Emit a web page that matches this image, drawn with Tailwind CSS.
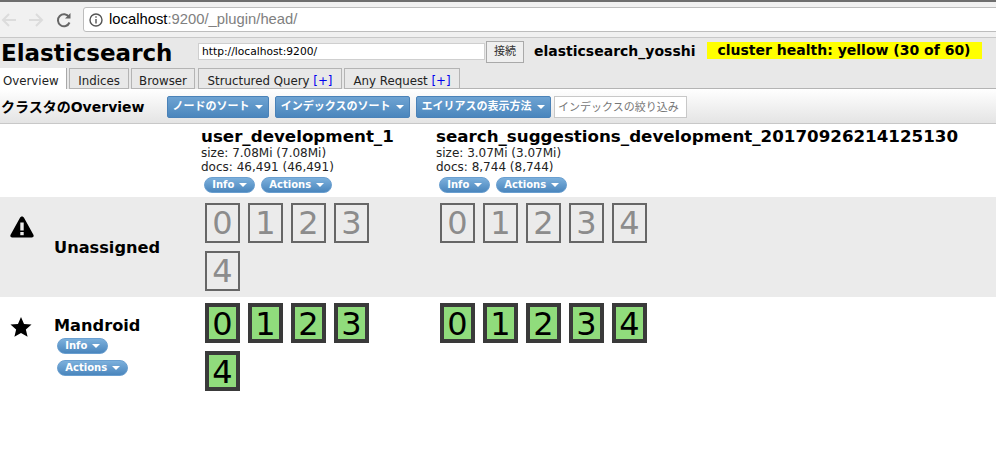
<!DOCTYPE html>
<html lang="en">
<head>
  <meta charset="UTF-8" />
  <title>Elasticsearch head</title>
  <script src="https://cdn.jsdelivr.net/npm/@tailwindcss/browser@4"></script>
</head>
<body class="w-[996px] h-[462px] overflow-hidden bg-white text-black font-['DejaVu_Sans','Noto_Sans_CJK_JP',sans-serif]">

  <!-- Browser bar -->
  <div class="h-[38px] bg-[#f1f1f1] border-t-2 border-t-[#6e6e6e] border-b border-b-[#c8c8c8] flex items-center">
    <svg class="ml-[1px] w-[16px] h-[16px]" viewBox="0 0 16 16" fill="none" stroke="#dcdcdc" stroke-width="2"><path d="M15 8H2M8 2L2 8l6 6"/></svg>
    <svg class="ml-[11px] w-[16px] h-[16px]" viewBox="0 0 16 16" fill="none" stroke="#dcdcdc" stroke-width="2"><path d="M1 8h13M8 2l6 6-6 6"/></svg>
    <svg class="ml-[12px] w-[16px] h-[16px]" viewBox="0 0 16 16" fill="none" stroke="#666" stroke-width="2"><path d="M13.5 10.5A6 6 0 1 1 13 5"/><path d="M14.5 1v5.500H9" fill="#666" stroke="none"/></svg>
    <div class="ml-[11px] flex-1 h-[25px] -mr-2 bg-white border border-[#bdbdbd] rounded-[3px] flex items-center font-['Liberation_Sans',sans-serif] text-[14.8px]">
      <svg class="ml-[5px] w-[14px] h-[14px]" viewBox="0 0 14 14" fill="none" stroke="#555" stroke-width="1.4"><circle cx="7" cy="7" r="6"/><path d="M7 6v4.500M7 3.200v1.500"/></svg>
      <span class="ml-[6px]">localhost<span class="text-[#808080]">:9200/_plugin/head/</span></span>
    </div>
  </div>

  <!-- Header -->
  <div class="h-[51px] bg-[#e8e8e8] flex items-start">
    <h1 class="ml-[1px] mt-[1px] w-[197px] text-[23px] leading-[28px] font-bold">Elasticsearch</h1>
    <input value="http://localhost:9200/" class="mt-[5px] w-[287px] h-[17px] bg-white border border-[#cfcfcf] px-[3px] text-[10.700px] text-black outline-none" />
    <button class="ml-[1px] mt-[3px] w-[38px] h-[22px] bg-[#efefef] border border-[#a9a9a9] text-[11px] text-[#333]">接続</button>
    <span class="ml-[10px] mt-[3px] text-[14px] leading-[20px] font-bold">elasticsearch_yosshi</span>
    <span class="ml-[11px] mt-[4px] w-[275px] h-[17px] bg-[#ffff00] text-center text-[14px] leading-[17px] font-bold">cluster health: yellow (30 of 60)</span>
  </div>

  <!-- Tabs -->
  <div class="h-0 -mt-[21px] mb-[21px] flex items-start text-[11.800px] text-[#222] relative">
    <div class="h-[21px] w-[67px] bg-white border-r border-[#a9a9a9] pl-[3px] leading-[26px] relative">Overview</div>
    <div class="ml-[2px] h-[21px] w-[60px] border border-[#b4b4b4] text-center leading-[24px]">Indices</div>
    <div class="ml-[2px] h-[21px] w-[64px] border border-[#b4b4b4] text-center leading-[24px]">Browser</div>
    <div class="ml-[3px] h-[21px] w-[144px] border border-[#b4b4b4] text-center leading-[24px]">Structured Query <span class="text-[#0000ee]">[+]</span></div>
    <div class="ml-[2px] h-[21px] w-[116px] border border-[#b4b4b4] text-center leading-[24px]">Any Request <span class="text-[#0000ee]">[+]</span></div>
    <div class="flex-1 h-[21px] border-b border-[#b4b4b4]"></div>
  </div>

  <!-- Toolbar -->
  <div class="h-[35px] pt-[2px] border-b border-[#c8c8c8] bg-gradient-to-b from-white to-[#e4e4e4] flex items-center">
    <span class="ml-[1px] w-[166px] text-[14px] font-bold">クラスタのOverview</span>
    <button class="h-[22px] w-[102px] rounded-[2px] border border-[#4a82b8] bg-gradient-to-b from-[#6ea3d2] to-[#4a86bd] text-white text-[11px] font-bold">ノードのソート <span class="inline-block align-middle ml-[2px] border-x-[4px] border-x-transparent border-t-[4px] border-t-white"></span></button>
    <button class="ml-[6px] h-[22px] w-[135px] rounded-[2px] border border-[#4a82b8] bg-gradient-to-b from-[#6ea3d2] to-[#4a86bd] text-white text-[11px] font-bold">インデックスのソート <span class="inline-block align-middle ml-[2px] border-x-[4px] border-x-transparent border-t-[4px] border-t-white"></span></button>
    <button class="ml-[6px] h-[22px] w-[135px] rounded-[2px] border border-[#4a82b8] bg-gradient-to-b from-[#6ea3d2] to-[#4a86bd] text-white text-[11px] font-bold">エイリアスの表示方法 <span class="inline-block align-middle ml-[2px] border-x-[4px] border-x-transparent border-t-[4px] border-t-white"></span></button>
    <input placeholder="インデックスの絞り込み" class="ml-[3px] w-[133px] h-[22px] bg-white border border-[#c8c8c8] px-[3px] text-[11px] outline-none placeholder:text-[#777]" />
  </div>

  <!-- Cluster table -->
  <div class="grid grid-cols-[201px_235px_1fr] grid-rows-[73px_100px_auto]">
    <div></div>
    <div class="pt-[3px]">
      <div class="text-[16.700px] leading-[19px] font-bold">user_development_1</div>
      <div class="text-[12px] leading-[14px] text-[#222]">size: 7.08Mi (7.08Mi)</div>
      <div class="text-[12px] leading-[14px] text-[#222]">docs: 46,491 (46,491)</div>
      <div class="flex gap-[6px] pl-[3px] mt-[3px]">
        <button class="w-[51px] h-[16px] rounded-full border border-[#6a9fd0] bg-gradient-to-b from-[#7cb0dc] to-[#4a86bd] text-white text-[10px] leading-[14px] font-bold">Info <span class="inline-block align-middle ml-[1px] border-x-[4px] border-x-transparent border-t-[4px] border-t-white"></span></button>
        <button class="w-[71px] h-[16px] rounded-full border border-[#6a9fd0] bg-gradient-to-b from-[#7cb0dc] to-[#4a86bd] text-white text-[10px] leading-[14px] font-bold">Actions <span class="inline-block align-middle ml-[1px] border-x-[4px] border-x-transparent border-t-[4px] border-t-white"></span></button>
      </div>
    </div>
    <div class="pt-[3px]">
      <div class="text-[16.700px] leading-[19px] font-bold">search_suggestions_development_20170926214125130</div>
      <div class="text-[12px] leading-[14px] text-[#222]">size: 3.07Mi (3.07Mi)</div>
      <div class="text-[12px] leading-[14px] text-[#222]">docs: 8,744 (8,744)</div>
      <div class="flex gap-[6px] pl-[3px] mt-[3px]">
        <button class="w-[51px] h-[16px] rounded-full border border-[#6a9fd0] bg-gradient-to-b from-[#7cb0dc] to-[#4a86bd] text-white text-[10px] leading-[14px] font-bold">Info <span class="inline-block align-middle ml-[1px] border-x-[4px] border-x-transparent border-t-[4px] border-t-white"></span></button>
        <button class="w-[71px] h-[16px] rounded-full border border-[#6a9fd0] bg-gradient-to-b from-[#7cb0dc] to-[#4a86bd] text-white text-[10px] leading-[14px] font-bold">Actions <span class="inline-block align-middle ml-[1px] border-x-[4px] border-x-transparent border-t-[4px] border-t-white"></span></button>
      </div>
    </div>

    <!-- Unassigned -->
    <div class="bg-[#ebebeb] flex">
      <svg class="ml-[10px] mt-[19px] w-[24px] h-[22px] shrink-0" viewBox="0 0 24 22"><path d="M12 0.5c1 0 1.600.6 2 1.300l9.400 17c.7 1.300-.1 2.700-1.600 2.700H2.200C.7 21.500-.1 20.100.6 18.800l9.400-17c.4-.7 1-1.300 2-1.300z"/><rect x="10.300" y="6.500" width="3.400" height="8" fill="#ebebeb"/><rect x="10.300" y="16" width="3.400" height="3.200" fill="#ebebeb"/></svg>
      <span class="ml-[20px] mt-[41px] text-[16.200px] leading-[20px] font-bold">Unassigned</span>
    </div>
    <div class="bg-[#ebebeb] pl-[4px] pt-[6px]">
      <div class="w-[172px] flex flex-wrap gap-x-[8px] gap-y-[8px]">
        <div class="w-[35px] h-[40px] border-2 border-[#666] text-[#8c8c8c] text-[32px] leading-[36px] text-center">0</div>
        <div class="w-[35px] h-[40px] border-2 border-[#666] text-[#8c8c8c] text-[32px] leading-[36px] text-center">1</div>
        <div class="w-[35px] h-[40px] border-2 border-[#666] text-[#8c8c8c] text-[32px] leading-[36px] text-center">2</div>
        <div class="w-[35px] h-[40px] border-2 border-[#666] text-[#8c8c8c] text-[32px] leading-[36px] text-center">3</div>
        <div class="w-[35px] h-[40px] border-2 border-[#666] text-[#8c8c8c] text-[32px] leading-[36px] text-center">4</div>
      </div>
    </div>
    <div class="bg-[#ebebeb] pl-[4px] pt-[6px]">
      <div class="flex flex-wrap gap-x-[8px] gap-y-[8px]">
        <div class="w-[35px] h-[40px] border-2 border-[#666] text-[#8c8c8c] text-[32px] leading-[36px] text-center">0</div>
        <div class="w-[35px] h-[40px] border-2 border-[#666] text-[#8c8c8c] text-[32px] leading-[36px] text-center">1</div>
        <div class="w-[35px] h-[40px] border-2 border-[#666] text-[#8c8c8c] text-[32px] leading-[36px] text-center">2</div>
        <div class="w-[35px] h-[40px] border-2 border-[#666] text-[#8c8c8c] text-[32px] leading-[36px] text-center">3</div>
        <div class="w-[35px] h-[40px] border-2 border-[#666] text-[#8c8c8c] text-[32px] leading-[36px] text-center">4</div>
      </div>
    </div>

    <!-- Mandroid -->
    <div class="flex">
      <svg class="ml-[10px] mt-[19px] w-[22px] h-[22px] shrink-0" viewBox="0 0 24 24"><path d="M12 1l3.300 7.600 8.200.7-6.200 5.400 1.900 8L12 18.500l-7.200 4.200 1.900-8L.5 9.300l8.200-.7z"/></svg>
      <div class="ml-[22px] mt-[19px]">
        <div class="text-[16.200px] leading-[20px] font-bold">Mandroid</div>
        <button class="block ml-[3px] mt-[2px] w-[51px] h-[16px] rounded-full border border-[#6a9fd0] bg-gradient-to-b from-[#7cb0dc] to-[#4a86bd] text-white text-[10px] leading-[14px] font-bold">Info <span class="inline-block align-middle ml-[1px] border-x-[4px] border-x-transparent border-t-[4px] border-t-white"></span></button>
        <button class="block ml-[3px] mt-[6px] w-[71px] h-[16px] rounded-full border border-[#6a9fd0] bg-gradient-to-b from-[#7cb0dc] to-[#4a86bd] text-white text-[10px] leading-[14px] font-bold">Actions <span class="inline-block align-middle ml-[1px] border-x-[4px] border-x-transparent border-t-[4px] border-t-white"></span></button>
      </div>
    </div>
    <div class="pl-[4px] pt-[6px]">
      <div class="w-[172px] flex flex-wrap gap-x-[8px] gap-y-[8px]">
        <div class="w-[35px] h-[40px] border-4 border-[#3a3a3a] bg-[#90dc7c] text-[32px] leading-[34px] text-center">0</div>
        <div class="w-[35px] h-[40px] border-4 border-[#3a3a3a] bg-[#90dc7c] text-[32px] leading-[34px] text-center">1</div>
        <div class="w-[35px] h-[40px] border-4 border-[#3a3a3a] bg-[#90dc7c] text-[32px] leading-[34px] text-center">2</div>
        <div class="w-[35px] h-[40px] border-4 border-[#3a3a3a] bg-[#90dc7c] text-[32px] leading-[34px] text-center">3</div>
        <div class="w-[35px] h-[40px] border-4 border-[#3a3a3a] bg-[#90dc7c] text-[32px] leading-[34px] text-center">4</div>
      </div>
    </div>
    <div class="pl-[4px] pt-[6px]">
      <div class="flex flex-wrap gap-x-[8px] gap-y-[8px]">
        <div class="w-[35px] h-[40px] border-4 border-[#3a3a3a] bg-[#90dc7c] text-[32px] leading-[34px] text-center">0</div>
        <div class="w-[35px] h-[40px] border-4 border-[#3a3a3a] bg-[#90dc7c] text-[32px] leading-[34px] text-center">1</div>
        <div class="w-[35px] h-[40px] border-4 border-[#3a3a3a] bg-[#90dc7c] text-[32px] leading-[34px] text-center">2</div>
        <div class="w-[35px] h-[40px] border-4 border-[#3a3a3a] bg-[#90dc7c] text-[32px] leading-[34px] text-center">3</div>
        <div class="w-[35px] h-[40px] border-4 border-[#3a3a3a] bg-[#90dc7c] text-[32px] leading-[34px] text-center">4</div>
      </div>
    </div>
  </div>
</body>
</html>
